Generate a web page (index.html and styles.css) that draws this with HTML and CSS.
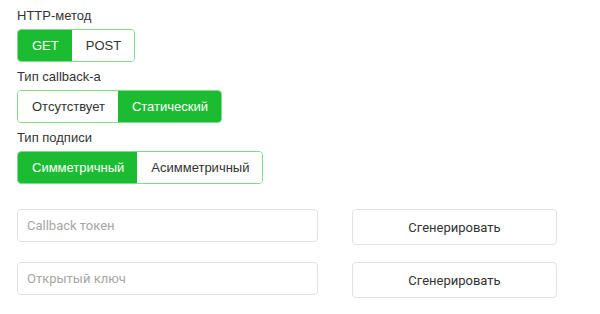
FILE: index.html
```html
<!DOCTYPE html>
<html lang="ru">
<head>
    <meta charset="UTF-8">
    <title>Настройки callback</title>
    <link rel="stylesheet" href="styles.css">
</head>
<body>
    <div class="settings">
        <div class="field">
            <div class="field-label">HTTP-метод</div>
            <div class="segmented">
                <button class="segment active">GET</button>
                <button class="segment">POST</button>
            </div>
        </div>

        <div class="field">
            <div class="field-label">Тип callback-а</div>
            <div class="segmented">
                <button class="segment">Отсутствует</button>
                <button class="segment active">Статический</button>
            </div>
        </div>

        <div class="field">
            <div class="field-label">Тип подписи</div>
            <div class="segmented">
                <button class="segment active">Симметричный</button>
                <button class="segment">Асимметричный</button>
            </div>
        </div>

        <div class="key-row first">
            <input class="text-input" type="text" placeholder="Callback токен">
            <button class="generate-button">Сгенерировать</button>
        </div>

        <div class="key-row">
            <input class="text-input" type="text" placeholder="Открытый ключ">
            <button class="generate-button">Сгенерировать</button>
        </div>
    </div>
</body>
</html>
```

FILE: styles.css
```css
* {
    margin: 0;
    padding: 0;
    box-sizing: border-box;
}

:root {
    --green: #1bbb32;
    --green-light: #7fdc8c;
    --text-color: #333333;
    --border-color: #e2e2e2;
}

body {
    background-color: #ffffff;
    color: var(--text-color);
    font-family: 'Liberation Sans', Arial, sans-serif;
    font-size: 13px;
}

.settings {
    padding: 6px 17px 0;
}

.field {
    margin-bottom: 5px;
}

.field-label {
    font-size: 13px;
    line-height: 20px;
    margin-bottom: 3px;
    color: #333;
}

/* Переключатель из двух кнопок */
.segmented {
    display: inline-flex;
    height: 33px;
    border: 1px solid var(--green-light);
    border-radius: 4px;
    overflow: hidden;
}

.segment {
    border: none;
    background: #fff;
    color: var(--text-color);
    font-family: 'Liberation Sans', Arial, sans-serif;
    font-size: 13px;
    padding: 0 13px 0 14px;
    cursor: pointer;
}

.segment.active {
    background-color: var(--green);
    color: #ffffff;
}

/* Поля ключей */
.key-row {
    display: flex;
    align-items: flex-start;
    gap: 34px;
    margin-bottom: 17px;
}

.key-row.first {
    margin-top: 25px;
}

.text-input {
    width: 301px;
    height: 33px;
    border: 1px solid var(--border-color);
    border-radius: 4px;
    padding: 0 9px;
    font-family: Roboto, sans-serif;
    font-size: 13px;
    color: var(--text-color);
    outline: none;
}

.text-input::placeholder {
    color: #a6a6a6;
}

.generate-button {
    width: 205px;
    height: 36px;
    border: 1px solid var(--border-color);
    border-radius: 4px;
    background: #ffffff;
    font-family: Roboto, sans-serif;
    font-size: 13px;
    color: var(--text-color);
    cursor: pointer;
}
```
